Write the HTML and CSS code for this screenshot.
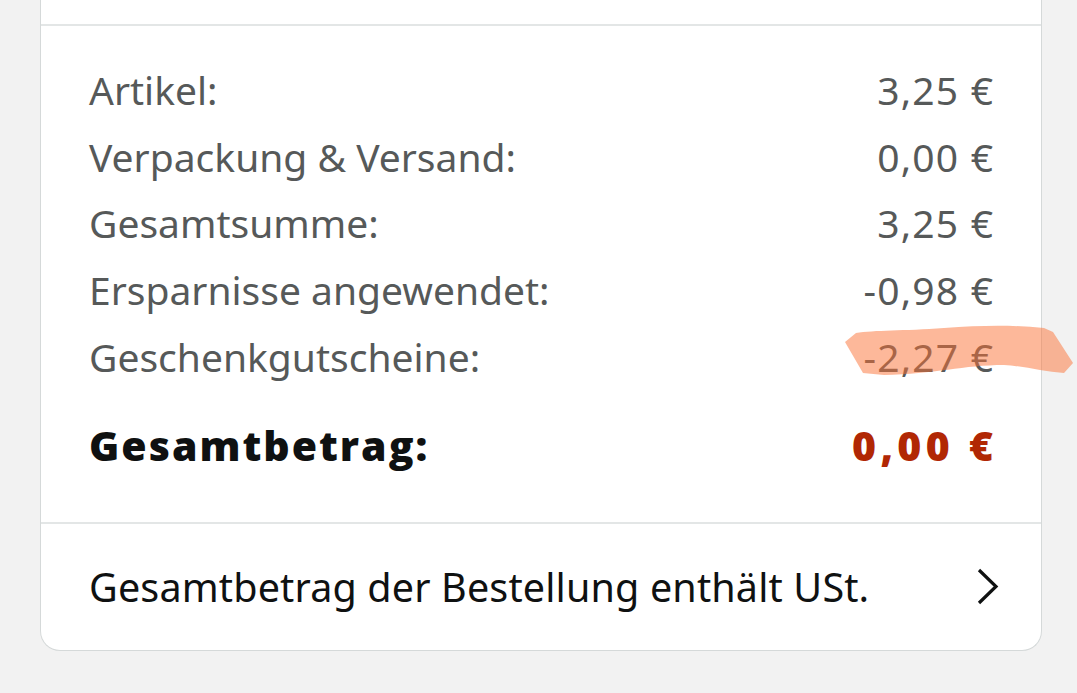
FILE: index.html
```html
<!DOCTYPE html>
<html lang="de">
<head>
<meta charset="utf-8">
<link rel="stylesheet" href="styles.css">
</head>
<body>
<div class="card">
  <div class="top"></div>
  <div class="summary">
    <div class="row"><span>Artikel:</span><span class="val">3,25 €</span></div>
    <div class="row"><span>Verpackung &amp; Versand:</span><span class="val">0,00 €</span></div>
    <div class="row"><span>Gesamtsumme:</span><span class="val">3,25 €</span></div>
    <div class="row"><span>Ersparnisse angewendet:</span><span class="val">-0,98 €</span></div>
    <div class="row"><span>Geschenkgutscheine:</span><span class="val">-2,27 €</span></div>
    <div class="row total"><span class="label">Gesamtbetrag:</span><span class="amount">0,00 €</span></div>
  </div>
  <div class="footer">
    <span class="note">Gesamtbetrag der Bestellung enthält USt.</span>
    <svg class="chev" width="26" height="40" viewBox="0 0 26 40"><path d="M4 3 L21 19.5 L4 36" fill="none" stroke="#0f1111" stroke-width="3.2"/></svg>
  </div>
  <svg class="marker" width="235" height="58" viewBox="0 0 235 58"><path d="M1,20 L12,11 C30,8 60,9 100,6 C140,3 170,3 200,6 L209,10 L229,41 L220,51 C200,50 180,44 160,43 C120,43 90,52 40,53 L19,51 Z" fill="rgb(251,113,53)" fill-opacity="0.5"/></svg>
</div>
</body>
</html>
```
FILE: styles.css
```css
html, body {
  margin: 0;
  padding: 0;
  background: #f2f2f2;
  height: 100%;
  overflow: hidden;
}
body {
  font-family: "Noto Sans", "Open Sans", sans-serif;
}
.card {
  position: relative;
  margin-left: 40px;
  width: 1002px;
  box-sizing: border-box;
  background: #fff;
  border: 1px solid #d5d9d9;
  border-top: none;
  border-radius: 0 0 20px 20px;
}
.top {
  height: 24px;
  border-bottom: 2px solid #e3e6e6;
}
.summary {
  padding: 31px 48px 0;
  border-bottom: 2px solid #e3e6e6;
}
.row {
  display: flex;
  justify-content: space-between;
  font-size: 39px;
  line-height: 66.7px;
  color: #565959;
}
.val {
  letter-spacing: 1.2px;
  margin-right: -1.2px;
}
.row.total {
  font-family: "Open Sans", "Noto Sans", sans-serif;
  font-weight: 800;
  font-size: 41px;
  color: #0f1111;
  line-height: 60px;
  padding: 24px 0 47px;
}
.label {
  letter-spacing: 2px;
}
.amount {
  color: #b12704;
  letter-spacing: 4.3px;
  margin-right: -4.3px;
}
.footer {
  height: 126px;
  padding: 0 40px 0 48px;
  display: flex;
  align-items: center;
  justify-content: space-between;
  font-size: 39.5px;
  color: #0f1111;
}
.note {
  letter-spacing: 0.15px;
}
.chev {
  display: block;
}
.marker {
  position: absolute;
  left: 803px;
  top: 322px;
}
```
